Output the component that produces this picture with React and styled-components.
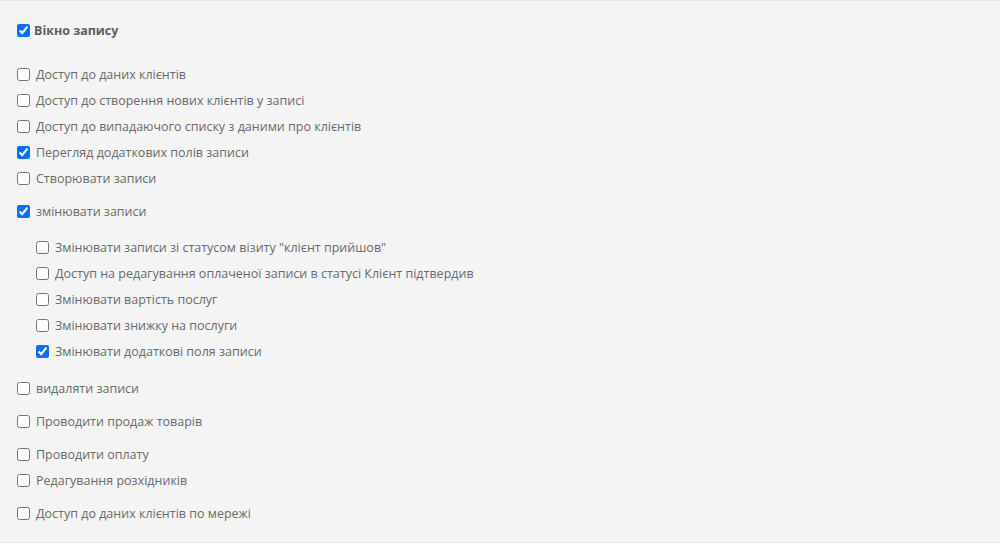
import React from "react";
import styled, { createGlobalStyle } from "styled-components";

const Global = createGlobalStyle`
  html, body { margin: 0; padding: 0; background: #ffffff; }
  body { font-family: "Open Sans", "Noto Sans", sans-serif; }
`;

const Panel = styled.div`
  box-sizing: border-box;
  height: 543px;
  background: #f4f4f4;
  border-top: 1px solid #e4e4e4;
  border-bottom: 1px solid #e4e4e4;
  padding: 16px 0 0 13px;
  display: flex;
  flex-direction: column;
`;

const Group = styled.div`
  display: flex;
  flex-direction: column;
  margin-top: ${(p) => p.$gap || 0}px;
  padding-left: ${(p) => (p.$nested ? 19 : 0)}px;
`;

const Row = styled.label`
  display: flex;
  align-items: center;
  height: 26px;
  font-size: ${(p) => (p.$header ? 12.5 : 12.5)}px;
  font-weight: ${(p) => (p.$header ? 700 : 400)};
  color: ${(p) => (p.$header ? "#5e5e5e" : "#6a6a6a")};
  cursor: pointer;
`;

const Box = styled.input.attrs({ type: "checkbox" })`
  width: 13px;
  height: 13px;
  margin: 0 ${(p) => (p.$header ? 4 : 6)}px 0 4px;
  accent-color: #0b6fff;
`;

const Item = ({ label, checked, header }) => (
  <Row $header={header}>
    <Box defaultChecked={checked} $header={header} />
    {label}
  </Row>
);

export default function App() {
  return (
    <>
      <Global />
      <Panel>
        <Item header checked label="Вікно запису" />
        <Group $gap={18}>
          <Item label="Доступ до даних клієнтів" />
          <Item label="Доступ до створення нових клієнтів у записі" />
          <Item label="Доступ до випадаючого списку з даними про клієнтів" />
          <Item checked label="Перегляд додаткових полів записи" />
          <Item label="Створювати записи" />
        </Group>
        <Group $gap={7}>
          <Item checked label="змінювати записи" />
        </Group>
        <Group $gap={10} $nested>
          <Item label={'Змінювати записи зі статусом візиту "клієнт прийшов"'} />
          <Item label="Доступ на редагування оплаченої записи в статусі Клієнт підтвердив" />
          <Item label="Змінювати вартість послуг" />
          <Item label="Змінювати знижку на послуги" />
          <Item checked label="Змінювати додаткові поля записи" />
        </Group>
        <Group $gap={11}>
          <Item label="видаляти записи" />
        </Group>
        <Group $gap={7}>
          <Item label="Проводити продаж товарів" />
        </Group>
        <Group $gap={7}>
          <Item label="Проводити оплату" />
          <Item label="Редагування розхідників" />
        </Group>
        <Group $gap={7}>
          <Item label="Доступ до даних клієнтів по мережі" />
        </Group>
      </Panel>
    </>
  );
}
